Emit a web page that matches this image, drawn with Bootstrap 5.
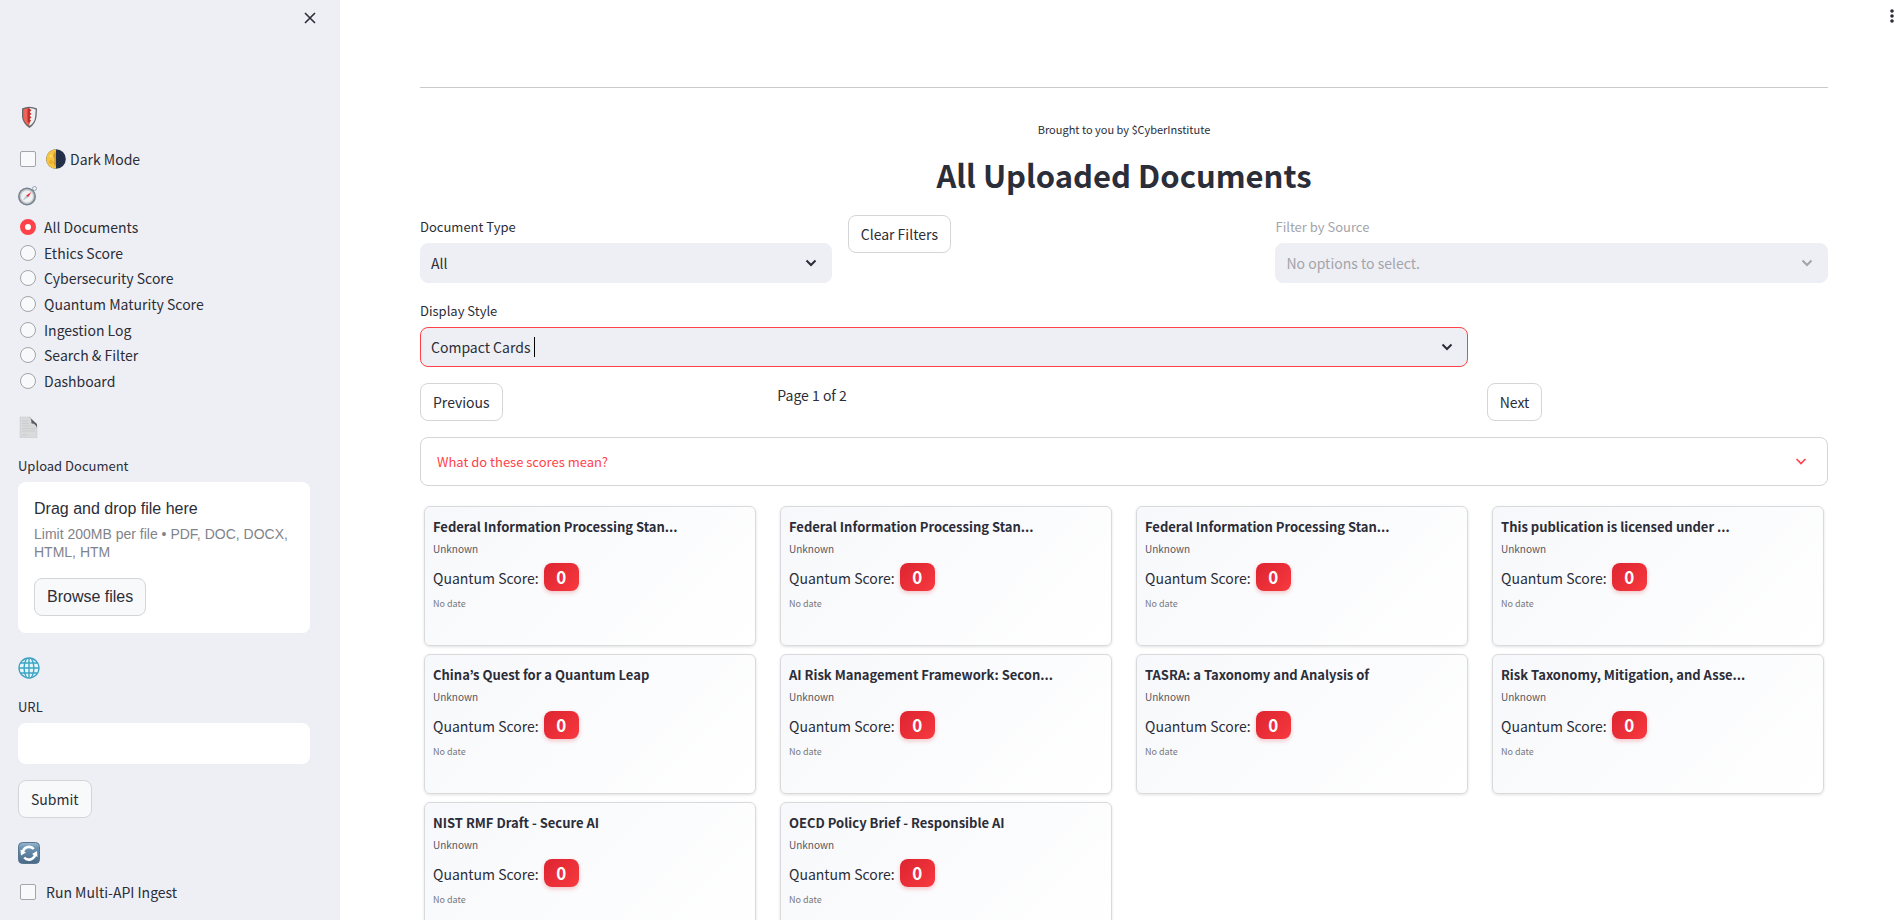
<!DOCTYPE html>
<html lang="en">
<head>
<meta charset="utf-8">
<meta name="viewport" content="width=device-width, initial-scale=1">
<title>All Uploaded Documents</title>
<link href="https://cdn.jsdelivr.net/npm/bootstrap@5.3.0/dist/css/bootstrap.min.css" rel="stylesheet">
<style>
  :root { --ink: #2b2d38; --panel: #eeeff4; --line: #d4d5d8; --accent: #ff4249; --muted: #a3a4aa; }
  body { font-family: "Source Sans Pro", "Noto Sans CJK KR", sans-serif; font-size: 14px; line-height: 24px; color: var(--ink); background: #fff; }
  .sidebar { width: 340px; background: var(--panel); padding: 8px 30px 0 18px; scrollbar-width: none; }
  .content { padding: 87px 69px 0 80px; scrollbar-width: none; }
  .side-icon { display: block; width: 22px; height: 22px; }
  .close-row { height: 98px; margin-right: -10px; }
  .plain-btn { border: 0; background: none; padding: 0; color: var(--ink); line-height: 0; }
  .ui-btn { --bs-btn-font-size: 14px; --bs-btn-line-height: 24px; --bs-btn-padding-x: 12px; --bs-btn-padding-y: 6px;
    --bs-btn-border-radius: 8px; --bs-btn-border-color: var(--line); --bs-btn-color: var(--ink); --bs-btn-bg: #fff;
    --bs-btn-hover-color: var(--accent); --bs-btn-hover-border-color: var(--accent); }
  .sidebar .ui-btn { --bs-btn-bg: #f8f9fb; }
  .tick { display: flex; align-items: center; gap: 10px; margin: 0; padding: 0 0 0 2px; min-height: 24px; }
  .tick .form-check-input { float: none; margin: 0; width: 16px; height: 16px; flex: none; background-color: #f8f9fb; border-color: #a3a5ab; }
  .tick .form-check-input[type=checkbox] { border-radius: 2px; }
  .dark-toggle { margin: 19px 0 14px; }
  .nav-choice { display: flex; flex-direction: column; justify-content: space-between; height: 178px; margin: 8px 0 23px; }
  .nav-choice .tick { gap: 8px; }
  .tick .form-check-input[type=radio]:checked { border: 5px solid var(--accent); background: #fff; }
  .field-label { display: block; font-size: 13px; line-height: 24px; margin-bottom: 4px; }
  .field-label.is-off { color: var(--muted); }
  .ui-select { height: 40px; background-color: var(--panel); border: 1px solid var(--panel); border-radius: 8px; color: var(--ink);
    font-size: 14px; line-height: 24px; padding: 6px 40px 6px 10px; background-position: right 12px center; background-size: 16px 16px;
    background-image: url("data:image/svg+xml,%3Csvg xmlns='http://www.w3.org/2000/svg' viewBox='0 0 16 16'%3E%3Cpath fill='none' stroke='%232b2d38' stroke-width='2' d='M3.500 5.500l4.500 4.500 4.500-4.500'/%3E%3C/svg%3E"); }
  .ui-select:disabled { background-color: var(--panel); color: var(--muted); opacity: 1;
    background-image: url("data:image/svg+xml,%3Csvg xmlns='http://www.w3.org/2000/svg' viewBox='0 0 16 16'%3E%3Cpath fill='none' stroke='%23a3a4aa' stroke-width='2' d='M3.500 5.500l4.500 4.500 4.500-4.500'/%3E%3C/svg%3E"); }
  .ui-select.active-field { border-color: var(--accent); }
  .text-caret { position: absolute; left: 114px; top: 10px; width: 1px; height: 20px; background: #000; }
  .drop-zone { background: #fff; border-radius: 8px; padding: 15px 16px 17px; font-family: "Liberation Sans", sans-serif; font-size: 16px; }
  .drop-zone .ui-btn { --bs-btn-font-size: 16px; --bs-btn-font-family: "Liberation Sans", sans-serif; }
  .drop-hint { font-size: 14px; line-height: 18px; color: #82838a; margin: 4px 0 17px; }
  .url-box { height: 41px; border: 0; border-radius: 8px; background: #fff; }
  .split { display: flex; gap: 16px; }
  .split > * { flex: 1 1 calc(var(--share) - 16px); min-width: 0; }
  .share-25 { --share: 25%; } .share-30 { --share: 30%; } .share-40 { --share: 40%; }
  .share-50 { --share: 50%; } .share-75 { --share: 75%; }
  .top-rule { margin: 0; border-color: #c9cacd; opacity: 1; }
  .credit { font-size: 11px; line-height: 20px; margin: 31px 0 14px; text-align: center; }
  .page-title { font-size: 31px; line-height: 44px; font-weight: 700; margin: 0 0 18px; text-align: center; }
  .score-help { border: 1px solid var(--line); border-radius: 8px; }
  .score-help summary { display: flex; justify-content: space-between; align-items: center; list-style: none; height: 47px; padding: 0 18px 0 16px; font-size: 13px; color: var(--accent); }
  .doc-grid { display: grid; grid-template-columns: repeat(4, 1fr); column-gap: 16px; }
  .doc-card { height: 140px; margin: 4px; padding: 8px; border: 1px solid #d9dadc; border-radius: 6px; background: linear-gradient(135deg, #f7f8fb, #fff); box-shadow: 0 1px 3px rgba(0,0,0,.12); }
  .doc-card h2 { font-size: 13px; line-height: 20px; font-weight: 700; margin: 2px 0 3px; }
  .doc-from { font-size: 10px; line-height: 18px; color: #55565c; margin: 0 0 6px; }
  .doc-score { line-height: 28px; margin: 0 0 4px; display: flex; gap: 5px; }
  .doc-date { font-size: 9px; line-height: 16px; color: #77787d; margin: 0; }
  .score-pill { width: 35px; height: 28px; line-height: 28px; margin-top: -1px; border-radius: 8px; text-align: center; color: #fff; font-weight: 700; font-size: 17px; background: linear-gradient(135deg, #dc2430, #f8393f); box-shadow: 0 2px 4px rgba(220,36,48,.25); }
  .page-menu { position: absolute; right: 0; top: 6px; }
</style>
</head>
<body class="vh-100 overflow-hidden">
<div class="d-flex h-100">
  <aside class="sidebar flex-shrink-0 h-100 overflow-auto">
    <div class="close-row d-flex justify-content-end align-items-start">
      <button class="plain-btn" aria-label="Close sidebar"><svg width="20" height="20" viewBox="0 0 20 20" fill="none" stroke="currentColor" stroke-width="1.600"><path d="M5 5l10 10M15 5L5 15"/></svg></button>
    </div>
    <svg class="side-icon" viewBox="0 0 22 22"><path d="M4 2.500Q11-1 19 2.500L18.500 11Q17.500 18 11.500 22Q5 18 4 11Z" fill="#66676b"/><path d="M5.300 3.500Q8 2 11.500 1.900V20Q6 17 5.300 11Z" fill="#ee6558"/><path d="M11.500 1.900Q15 2 17.700 3.500L17.200 11Q16.500 17 11.500 20Z" fill="#eceef0"/><path d="M9.500 2.500h2l2 2-2 1.500 2 2-2 1.500 2 2-2 1.500 1.500 1.500-2 3-1.500-2z" fill="#c42e28"/></svg>
    <div class="tick dark-toggle">
      <input class="form-check-input" type="checkbox" id="dark">
      <label class="d-flex align-items-center" for="dark"><svg width="20" height="20" viewBox="0 0 20 20"><circle cx="10" cy="10" r="9.800" fill="#222f47"/><path d="M10 .2a9.800 9.800 0 0 0 0 19.600z" fill="#f7c440"/><path d="M9 2l1 3v10l-1 3-1.500-4 1-4-1.500-3 1-3z" fill="#d49a2f"/><circle cx="5" cy="7" r="1.500" fill="#ffda65"/><circle cx="5" cy="13" r="2" fill="#eaae32"/></svg><span class="ps-1">Dark Mode</span></label>
    </div>
    <svg class="side-icon" viewBox="0 0 22 22"><circle cx="16.500" cy="3.500" r="2" fill="none" stroke="#99a8b8"/><circle cx="9" cy="11.500" r="9" fill="#75818d"/><circle cx="9" cy="11.500" r="7.400" fill="#c5c9cd"/><circle cx="9" cy="11.500" r="6" fill="#f0f1f2"/><path d="M13.500 7l-3.400 5.300-2-1.800z" fill="#e83037"/><path d="M4.800 15.600l3.300-5.100 2 1.800z" fill="#b8c0c8"/></svg>
    <div class="nav-choice" role="radiogroup" aria-label="Section">
      <div class="tick"><input class="form-check-input" type="radio" name="section" id="s1" checked><label for="s1">All Documents</label></div>
      <div class="tick"><input class="form-check-input" type="radio" name="section" id="s2"><label for="s2">Ethics Score</label></div>
      <div class="tick"><input class="form-check-input" type="radio" name="section" id="s3"><label for="s3">Cybersecurity Score</label></div>
      <div class="tick"><input class="form-check-input" type="radio" name="section" id="s4"><label for="s4">Quantum Maturity Score</label></div>
      <div class="tick"><input class="form-check-input" type="radio" name="section" id="s5"><label for="s5">Ingestion Log</label></div>
      <div class="tick"><input class="form-check-input" type="radio" name="section" id="s6"><label for="s6">Search &amp; Filter</label></div>
      <div class="tick"><input class="form-check-input" type="radio" name="section" id="s7"><label for="s7">Dashboard</label></div>
    </div>
    <svg class="side-icon mb-3" viewBox="0 0 22 22"><path d="M2 1h10l7 8v13H2z" fill="#d9dadb" stroke="#c6c7c9" stroke-width=".5"/><path d="M11 1q2.500 1 2.500 6.500 4-.5 5.500 4.500V8z" fill="#595c60"/><path d="M4 5h6M4 7.500h7M4 10h9M4 12.500h13M4 15h13M4 19h5" stroke="#c6c8ca" stroke-width=".8"/></svg>
    <label class="field-label" for="upload">Upload Document</label>
    <div class="drop-zone mb-4">
      <div>Drag and drop file here</div>
      <p class="drop-hint">Limit 200MB per file • PDF, DOC, DOCX, HTML, HTM</p>
      <button class="btn ui-btn" id="upload" type="button">Browse files</button>
    </div>
    <svg class="side-icon mb-3" viewBox="0 0 22 22" fill="none"><circle cx="11" cy="11" r="10" fill="#e6f7fb" stroke="#3c9fc0" stroke-width="1.300"/><path d="M11 1v20M1 11h20M2.500 6h17M2.500 16h17M8.500 1.500Q3.500 11 8.500 20.500M13.500 1.500q5 9.500 0 19" stroke="#3ba5c6" stroke-width="1.400"/></svg>
    <label class="field-label" for="url">URL</label>
    <input class="form-control url-box mb-3" id="url" type="text">
    <button class="btn ui-btn mb-4" type="button">Submit</button>
    <svg class="side-icon" viewBox="0 0 22 22"><defs><linearGradient id="sync" x2="0" y2="1"><stop stop-color="#9ab9cf"/><stop offset=".25" stop-color="#6d93b3"/><stop offset="1" stop-color="#486985"/></linearGradient></defs><rect x=".5" y=".5" width="21" height="21" rx="4" fill="url(#sync)" stroke="#56758f"/><path d="M4.800 11a6.300 6.300 0 0 1 11-4M17.200 11.500a6.300 6.300 0 0 1-11 4" fill="none" stroke="#fff" stroke-width="2.600"/><path d="M2.500 7.500l.5 6 5-3zM19.500 15l-.5-6-5 3z" fill="#fff"/></svg>
    <div class="tick mt-3"><input class="form-check-input" type="checkbox" id="ingest"><label for="ingest">Run Multi-API Ingest</label></div>
  </aside>

  <main class="content flex-grow-1 h-100 overflow-auto position-relative">
    <button class="plain-btn page-menu" aria-label="Menu"><svg width="11" height="20" viewBox="0 0 11 20" fill="currentColor"><circle cx="6" cy="5" r="1.800"/><circle cx="6" cy="10" r="1.800"/><circle cx="6" cy="15" r="1.800"/></svg></button>
    <hr class="top-rule">
    <p class="credit">Brought to you by $CyberInstitute</p>
    <h1 class="page-title">All Uploaded Documents</h1>

    <div class="d-flex flex-column gap-3">
      <div class="split">
        <div class="share-30">
          <label class="field-label" for="type">Document Type</label>
          <select class="form-select ui-select" id="type"><option>All</option></select>
        </div>
        <div class="share-30"><button class="btn ui-btn" type="button">Clear Filters</button></div>
        <div class="share-40">
          <label class="field-label is-off" for="source">Filter by Source</label>
          <select class="form-select ui-select" id="source" disabled><option>No options to select.</option></select>
        </div>
      </div>
      <div class="split">
        <div class="share-75">
          <label class="field-label" for="display">Display Style</label>
          <div class="position-relative">
            <select class="form-select ui-select active-field" id="display"><option>Compact Cards</option></select>
            <span class="text-caret"></span>
          </div>
        </div>
        <div class="share-25"></div>
      </div>
      <div class="split">
        <div class="share-25"><button class="btn ui-btn" type="button">Previous</button></div>
        <div class="share-50">Page 1 of 2</div>
        <div class="share-25"><button class="btn ui-btn" type="button">Next</button></div>
      </div>
      <details class="score-help">
        <summary><span>What do these scores mean?</span><svg width="16" height="16" viewBox="0 0 16 16" fill="none" stroke="currentColor" stroke-width="1.700"><path d="M3.500 5l4.500 4.500 4.500-4.500"/></svg></summary>
      </details>
      <div class="doc-grid">
        <article class="doc-card"><h2>Federal Information Processing Stan...</h2><p class="doc-from">Unknown</p><p class="doc-score">Quantum Score: <span class="score-pill">0</span></p><p class="doc-date">No date</p></article>
        <article class="doc-card"><h2>Federal Information Processing Stan...</h2><p class="doc-from">Unknown</p><p class="doc-score">Quantum Score: <span class="score-pill">0</span></p><p class="doc-date">No date</p></article>
        <article class="doc-card"><h2>Federal Information Processing Stan...</h2><p class="doc-from">Unknown</p><p class="doc-score">Quantum Score: <span class="score-pill">0</span></p><p class="doc-date">No date</p></article>
        <article class="doc-card"><h2>This publication is licensed under ...</h2><p class="doc-from">Unknown</p><p class="doc-score">Quantum Score: <span class="score-pill">0</span></p><p class="doc-date">No date</p></article>
        <article class="doc-card"><h2>China’s Quest for a Quantum Leap</h2><p class="doc-from">Unknown</p><p class="doc-score">Quantum Score: <span class="score-pill">0</span></p><p class="doc-date">No date</p></article>
        <article class="doc-card"><h2>AI Risk Management Framework: Secon...</h2><p class="doc-from">Unknown</p><p class="doc-score">Quantum Score: <span class="score-pill">0</span></p><p class="doc-date">No date</p></article>
        <article class="doc-card"><h2>TASRA: a Taxonomy and Analysis of</h2><p class="doc-from">Unknown</p><p class="doc-score">Quantum Score: <span class="score-pill">0</span></p><p class="doc-date">No date</p></article>
        <article class="doc-card"><h2>Risk Taxonomy, Mitigation, and Asse...</h2><p class="doc-from">Unknown</p><p class="doc-score">Quantum Score: <span class="score-pill">0</span></p><p class="doc-date">No date</p></article>
        <article class="doc-card"><h2>NIST RMF Draft - Secure AI</h2><p class="doc-from">Unknown</p><p class="doc-score">Quantum Score: <span class="score-pill">0</span></p><p class="doc-date">No date</p></article>
        <article class="doc-card"><h2>OECD Policy Brief - Responsible AI</h2><p class="doc-from">Unknown</p><p class="doc-score">Quantum Score: <span class="score-pill">0</span></p><p class="doc-date">No date</p></article>
      </div>
    </div>
  </main>
</div>
<script src="https://cdn.jsdelivr.net/npm/bootstrap@5.3.0/dist/js/bootstrap.bundle.min.js"></script>
</body>
</html>
